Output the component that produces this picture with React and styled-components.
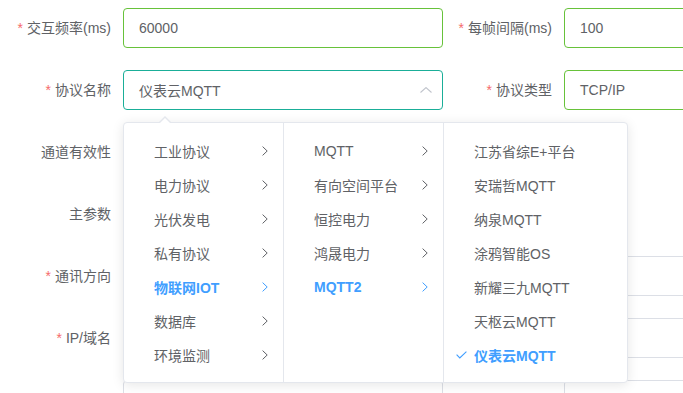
import React from "react";
import styled, { createGlobalStyle, css } from "styled-components";

const GlobalStyle = createGlobalStyle`
  html, body { margin: 0; padding: 0; background: #fff; overflow: hidden; }
  body { font-family: "Liberation Sans", "Noto Sans CJK SC", sans-serif; }
  * { box-sizing: border-box; }
`;

const Page = styled.div`
  padding: 8px 0 0 2px;
  width: 683px;
  height: 393px;
  overflow: hidden;
`;

const Form = styled.div`
  display: grid;
  grid-template-columns: 441px 441px;
  row-gap: 22px;
`;

const FormItem = styled.div`
  display: flex;
  height: 40px;
`;

const Label = styled.label`
  width: 121px;
  flex: none;
  padding-right: 12px;
  text-align: right;
  line-height: 40px;
  font-size: 14px;
  color: #606266;
  ${(p) =>
    p.$required &&
    css`
      &::before {
        content: "*";
        color: #f56c6c;
        margin-right: 4px;
      }
    `}
`;

const borderColors = {
  success: "#67c23a",
  focus: "#1aae98",
  normal: "#dcdfe6",
};

const Input = styled.div`
  width: 320px;
  height: 40px;
  flex: none;
  border: 1px solid ${(p) => borderColors[p.$state || "normal"]};
  border-radius: 4px;
  padding: 0 15px;
  display: flex;
  align-items: center;
  font-size: 14px;
  color: #606266;
  background: #fff;
`;

const SelectWrap = styled.div`
  position: relative;
  width: 320px;
  flex: none;
`;

const SelectBox = styled(Input)`
  justify-content: space-between;
  padding-right: 10px;
`;

const Popup = styled.div`
  position: absolute;
  top: 52px;
  left: 0;
  z-index: 10;
  display: flex;
  background: #fff;
  border: 1px solid #e4e7ed;
  border-radius: 4px;
  box-shadow: 0 2px 12px 0 rgba(0, 0, 0, 0.1);

  &::before,
  &::after {
    content: "";
    position: absolute;
    left: 35px;
    width: 0;
    height: 0;
    border-style: solid;
    border-color: transparent;
  }
  &::before {
    top: -7px;
    border-width: 0 6px 6px;
    border-bottom-color: #e4e7ed;
  }
  &::after {
    top: -5px;
    border-width: 0 6px 6px;
    border-bottom-color: #fff;
  }
`;

const Menu = styled.ul`
  list-style: none;
  margin: 0;
  padding: 11px 0 10px;
  width: ${(p) => p.$width}px;
  border-right: ${(p) => (p.$last ? "none" : "1px solid #e4e7ed")};
`;

const Item = styled.li`
  height: 34px;
  display: flex;
  align-items: center;
  padding: 0 15px 0 12px;
  font-size: 14px;
  color: ${(p) => (p.$active ? "#409eff" : "#606266")};
  font-weight: ${(p) => (p.$active ? 700 : 400)};
`;

const Prefix = styled.span`
  width: 18px;
  flex: none;
  display: flex;
  align-items: center;
`;

const ItemLabel = styled.span`
  flex: 1;
  white-space: nowrap;
`;

const Chevron = ({ color }) => (
  <svg width="6" height="10" viewBox="0 0 6 10">
    <polyline
      points="0.6,0.6 5.2,5 0.6,9.4"
      fill="none"
      stroke={color}
      strokeWidth="1"
    />
  </svg>
);

const Check = () => (
  <svg width="11" height="8" viewBox="0 0 11 8">
    <polyline
      points="0.6,3.6 3.8,7 10.4,0.6"
      fill="none"
      stroke="#409eff"
      strokeWidth="1.1"
    />
  </svg>
);

const ArrowUp = () => (
  <svg width="12" height="6" viewBox="0 0 12 6">
    <polyline
      points="0.5,5.5 6,0.6 11.5,5.5"
      fill="none"
      stroke="#c0c4cc"
      strokeWidth="1.1"
    />
  </svg>
);

const col1 = ["工业协议", "电力协议", "光伏发电", "私有协议", "物联网IOT", "数据库", "环境监测"];
const col2 = ["MQTT", "有向空间平台", "恒控电力", "鸿晟电力", "MQTT2"];
const col3 = ["江苏省综E+平台", "安瑞哲MQTT", "纳泉MQTT", "涂鸦智能OS", "新耀三九MQTT", "天枢云MQTT", "仪表云MQTT"];

const MenuColumn = ({ items, active, width, last, expand }) => (
  <Menu $width={width} $last={last}>
    {items.map((t) => {
      const isActive = t === active;
      return (
        <Item key={t} $active={isActive}>
          <Prefix>{!expand && isActive ? <Check /> : null}</Prefix>
          <ItemLabel>{t}</ItemLabel>
          {expand ? <Chevron color={isActive ? "#409eff" : "#606266"} /> : null}
        </Item>
      );
    })}
  </Menu>
);

export default function App() {
  return (
    <Page>
      <GlobalStyle />
      <Form>
        <FormItem>
          <Label $required>交互频率(ms)</Label>
          <Input $state="success">60000</Input>
        </FormItem>
        <FormItem>
          <Label $required>每帧间隔(ms)</Label>
          <Input $state="success">100</Input>
        </FormItem>

        <FormItem>
          <Label $required>协议名称</Label>
          <SelectWrap>
            <SelectBox $state="focus">
              <span>仪表云MQTT</span>
              <ArrowUp />
            </SelectBox>
            <Popup>
              <MenuColumn items={col1} active="物联网IOT" width={160} expand />
              <MenuColumn items={col2} active="MQTT2" width={160} expand />
              <MenuColumn items={col3} active="仪表云MQTT" width={183} last />
            </Popup>
          </SelectWrap>
        </FormItem>
        <FormItem>
          <Label $required>协议类型</Label>
          <Input $state="success">TCP/IP</Input>
        </FormItem>

        <FormItem>
          <Label>通道有效性</Label>
        </FormItem>
        <FormItem />

        <FormItem>
          <Label>主参数</Label>
        </FormItem>
        <FormItem />

        <FormItem>
          <Label $required>通讯方向</Label>
          <Input />
        </FormItem>
        <FormItem>
          <Label />
          <Input />
        </FormItem>

        <FormItem>
          <Label $required>IP/域名</Label>
          <Input />
        </FormItem>
        <FormItem>
          <Label />
          <Input />
        </FormItem>

        <FormItem>
          <Label />
          <Input />
        </FormItem>
        <FormItem>
          <Label />
          <Input />
        </FormItem>
      </Form>
    </Page>
  );
}
